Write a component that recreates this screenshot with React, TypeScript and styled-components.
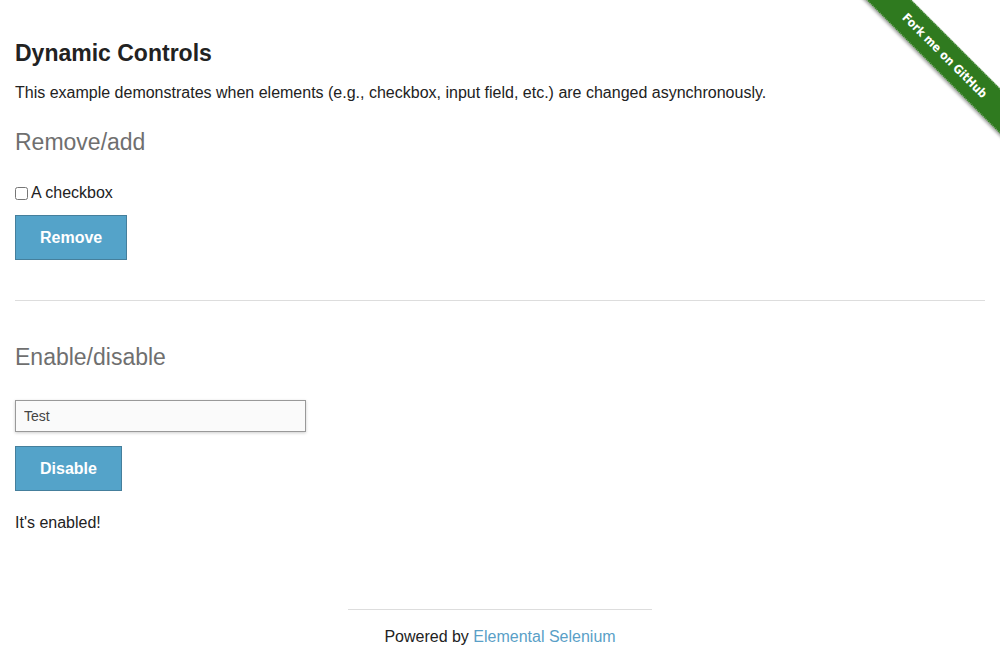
import styled, { createGlobalStyle } from "styled-components";

const GlobalStyle = createGlobalStyle`
  html, body {
    margin: 0;
    padding: 0;
    background: #ffffff;
  }

  body {
    font-family: "Liberation Sans", Arial, sans-serif;
    color: #222222;
  }
`;

export default function App() {
  return (
    <>
      <GlobalStyle />
      <Page>
        <Ribbon>
          <RibbonBand>Fork me on GitHub</RibbonBand>
        </Ribbon>
        <Content>
          <Title>Dynamic Controls</Title>
          <Intro>
            This example demonstrates when elements (e.g., checkbox, input field, etc.) are changed
            asynchronously.
          </Intro>
          <SectionTitle $top={26}>Remove/add</SectionTitle>
          <CheckboxRow>
            <Checkbox type="checkbox" />
            A checkbox
          </CheckboxRow>
          <ActionButton $top={12}>Remove</ActionButton>
          <Divider />
          <SectionTitle $top={43}>Enable/disable</SectionTitle>
          <TextInput defaultValue="Test" autoFocus />
          <ActionButton $top={14}>Disable</ActionButton>
          <Message>It's enabled!</Message>
        </Content>
        <Footer>
          <FooterRule />
          <FooterText>
            Powered by <FooterLink href="#">Elemental Selenium</FooterLink>
          </FooterText>
        </Footer>
      </Page>
    </>
  );
}

const Page = styled.div`
  position: relative;
  width: 1000px;
  height: 660px;
  overflow: hidden;
`;

const Ribbon = styled.div`
  position: absolute;
  top: 0;
  right: 0;
  width: 149px;
  height: 149px;
  overflow: hidden;
`;

const RibbonBand = styled.div`
  position: absolute;
  left: -17px;
  top: 39px;
  width: 220px;
  height: 32px;
  transform: rotate(45deg);
  background: #2f7a1f;
  border-top: 1px dotted rgba(255, 255, 255, 0.45);
  border-bottom: 1px dotted rgba(255, 255, 255, 0.45);
  box-shadow: 0 2px 3px rgba(0, 0, 0, 0.35);
  color: #ffffff;
  font-family: "DejaVu Sans Condensed", "Liberation Sans Narrow", sans-serif;
  font-weight: bold;
  font-size: 12px;
  line-height: 30px;
  text-align: center;
  box-sizing: border-box;
  padding-left: 2px;
`;

const Content = styled.div`
  display: flex;
  flex-direction: column;
  align-items: flex-start;
  padding: 0 15px;
`;

const Title = styled.h3`
  margin: 40px 0 0;
  font-size: 23px;
  line-height: 27px;
  font-weight: bold;
  color: #222222;
`;

const Intro = styled.p`
  margin: 16px 0 0;
  font-size: 16px;
  line-height: 20px;
`;

const SectionTitle = styled.h4<{ $top: number }>`
  margin: ${({ $top }) => $top}px 0 0;
  font-size: 23px;
  line-height: 27px;
  font-weight: normal;
  color: #6f6f6f;
`;

const CheckboxRow = styled.label`
  display: flex;
  align-items: center;
  margin-top: 27px;
  font-size: 16px;
  line-height: 20px;
`;

const Checkbox = styled.input`
  width: 13px;
  height: 13px;
  margin: 0 3px 0 0;
`;

const ActionButton = styled.button<{ $top: number }>`
  margin-top: ${({ $top }) => $top}px;
  height: 45px;
  padding: 0 24px;
  background: #54a3c9;
  border: 1px solid #457f9c;
  color: #ffffff;
  font-family: "Liberation Sans", Arial, sans-serif;
  font-size: 16px;
  font-weight: bold;
`;

const Divider = styled.hr`
  align-self: stretch;
  margin: 40px 0 0;
  border: 0;
  border-top: 1px solid #dddddd;
`;

const TextInput = styled.input`
  margin-top: 29px;
  width: 291px;
  height: 32px;
  box-sizing: border-box;
  padding: 0 8px;
  background: #fafafa;
  border: 1px solid #999999;
  box-shadow: 0 1px 3px rgba(0, 0, 0, 0.2);
  color: #444444;
  font-family: "Liberation Sans", Arial, sans-serif;
  font-size: 14px;
  outline: none;
`;

const Message = styled.p`
  margin: 22px 0 0;
  font-size: 16px;
  line-height: 20px;
`;

const Footer = styled.footer`
  display: flex;
  flex-direction: column;
  align-items: center;
  margin-top: 76px;
`;

const FooterRule = styled.hr`
  width: 304px;
  margin: 0;
  border: 0;
  border-top: 1px solid #dddddd;
`;

const FooterText = styled.div`
  margin-top: 17px;
  font-size: 16px;
  line-height: 20px;
  color: #222222;
`;

const FooterLink = styled.a`
  color: #5a9fc7;
  text-decoration: none;
`;
